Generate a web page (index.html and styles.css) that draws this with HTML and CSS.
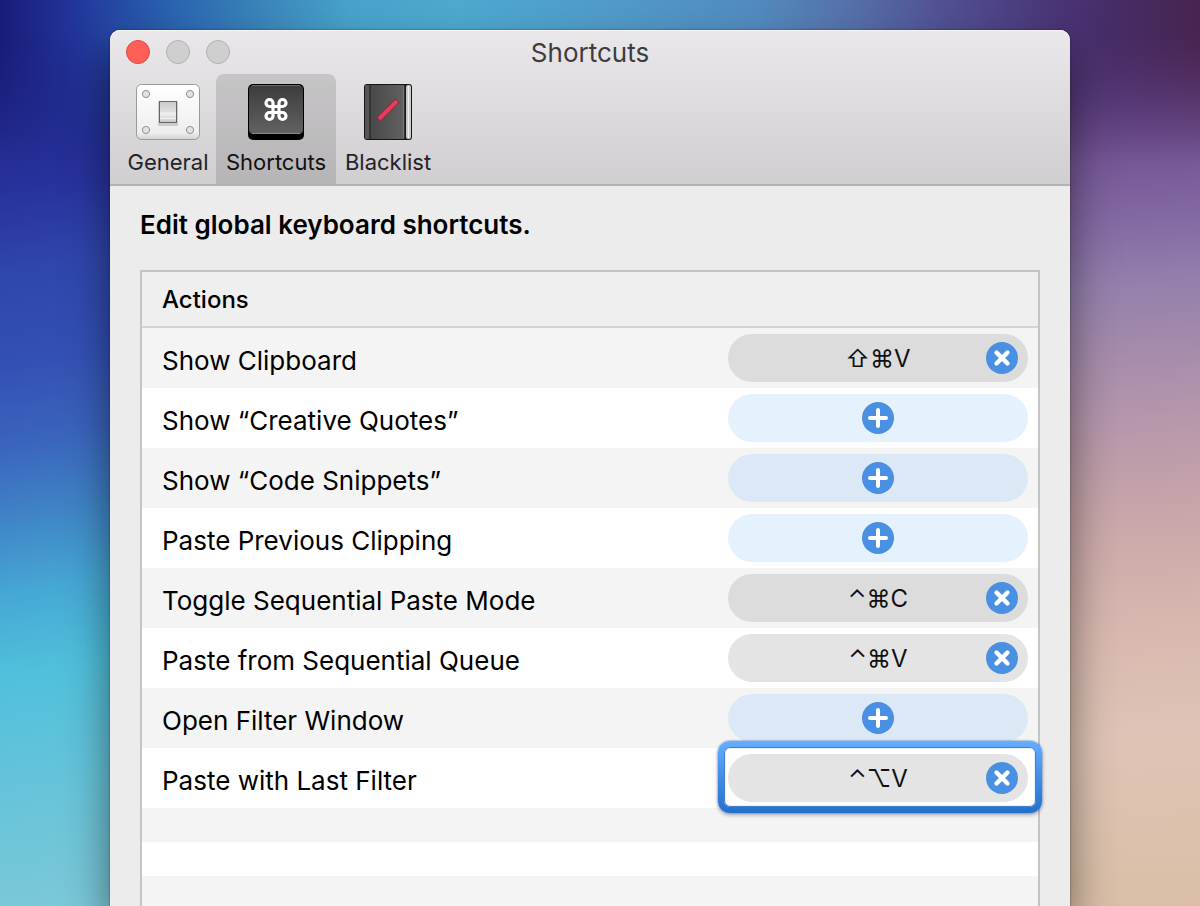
FILE: index.html
```
<!DOCTYPE html>
<html lang="en">
<head>
<meta charset="utf-8">
<title>Shortcuts</title>
<link rel="stylesheet" href="styles.css">
</head>
<body>
<svg class="defs" aria-hidden="true">
  <symbol id="plus" viewBox="0 0 32 32"><circle cx="16" cy="16" r="16" fill="#4a90e2"/><path d="M16 8v16M8 16h16" stroke="#fff" stroke-width="4" stroke-linecap="round"/></symbol>
  <symbol id="clear" viewBox="0 0 32 32"><circle cx="16" cy="16" r="16" fill="#4a90e2"/><path d="M10.500 10.500l11 11M21.500 10.500l-11 11" stroke="#fff" stroke-width="4.400" stroke-linecap="round"/></symbol>
</svg>
<main class="window">
  <header class="titlebar">
    <div class="title-row">
      <div class="lights">
        <button class="light light-close" aria-label="Close"></button>
        <button class="light" aria-label="Minimize" disabled></button>
        <button class="light" aria-label="Zoom" disabled></button>
      </div>
      <h1 class="title">Shortcuts</h1>
    </div>
    <nav class="tabs">
      <button class="tab tab-general">
        <svg class="tab-icon" viewBox="0 0 64 58" aria-hidden="true">
          <defs>
            <linearGradient id="plate" x2="0" y2="1"><stop offset="0" stop-color="#fff"/><stop offset=".88" stop-color="#eee"/><stop offset="1" stop-color="#d2d2d2"/></linearGradient>
            <linearGradient id="toggle" x2="0" y2="1"><stop offset="0" stop-color="#c9c9c9"/><stop offset=".5" stop-color="#e0e0e0"/><stop offset=".55" stop-color="#f1f1f1"/><stop offset="1" stop-color="#c6c6c6"/></linearGradient>
          </defs>
          <rect x=".5" y="1.500" width="63" height="55" rx="5" fill="url(#plate)" stroke="#999"/>
          <g fill="#e2e2e2" stroke="#929292"><circle cx="10" cy="11" r="3.600"/><circle cx="54" cy="11" r="3.600"/><circle cx="10" cy="47" r="3.600"/><circle cx="54" cy="47" r="3.600"/></g>
          <rect x="22" y="18" width="20" height="25" fill="#ccc"/>
          <rect x="23.500" y="18.500" width="17" height="21" fill="url(#toggle)" stroke="#666"/>
          <path d="M24 35.500h16" stroke="#f6f6f6"/>
        </svg>
        <span>General</span>
      </button>
      <button class="tab tab-shortcuts" aria-current="page">
        <svg class="tab-icon" viewBox="0 0 64 58" aria-hidden="true">
          <defs><linearGradient id="key" x2="0" y2="1"><stop offset="0" stop-color="#3c3c3c"/><stop offset="1" stop-color="#626262"/></linearGradient></defs>
          <rect x="4" y="1" width="56" height="56" rx="5" fill="#000"/>
          <rect x="5" y="2" width="54" height="49" rx="4.500" fill="url(#key)"/>
          <path d="M8 2.500h48" stroke="#696969"/><path d="M8 50.500h48" stroke="#898989"/>
          <path d="M29 23.500v6h6v-6zM29 23.500h-3.500a3.500 3.500 0 1 1 3.500-3.500zM35 23.500v-3.500a3.500 3.500 0 1 1 3.500 3.500zM35 29.500h3.500a3.500 3.500 0 1 1-3.500 3.500zM29 29.500v3.500a3.500 3.500 0 1 1-3.500-3.500z" fill="none" stroke="#fff" stroke-width="3.200"/>
        </svg>
        <span>Shortcuts</span>
      </button>
      <button class="tab tab-blacklist">
        <svg class="tab-icon" viewBox="0 0 64 58" aria-hidden="true">
          <defs><linearGradient id="cover"><stop offset="0" stop-color="#444"/><stop offset="1" stop-color="#626262"/></linearGradient></defs>
          <rect x="8" y="1" width="48" height="56" rx="3" fill="#151515"/>
          <rect x="50" y="2" width="5" height="54" rx="2" fill="#ccc"/><path d="M52.500 3v52" stroke="#eee"/>
          <rect x="9" y="2" width="40" height="54" rx="2" fill="url(#cover)"/>
          <rect x="9" y="2" width="4" height="54" fill="#555"/><path d="M14 2v54" stroke="#222"/><path d="M47.500 3v52" stroke="#777"/><path d="M48.500 2v54" stroke="#333"/>
          <path d="M24.500 34.500L39.500 19.500" stroke="#9c2539" stroke-width="6" stroke-linecap="square"/><path d="M24.500 34.500L39.500 19.500" stroke="#e0405d" stroke-width="4" stroke-linecap="square"/>
        </svg>
        <span>Blacklist</span>
      </button>
    </nav>
  </header>
  <section class="content">
    <h2 class="heading">Edit global keyboard shortcuts.</h2>
    <div class="list">
      <table class="table">
        <thead><tr><th colspan="2" scope="col">Actions</th></tr></thead>
        <tbody>
          <tr><td>Show Clipboard</td><td class="key-cell"><div class="pill"><button class="record">⇧⌘V</button><button class="clear" aria-label="Clear Show Clipboard"><svg><use href="#clear"/></svg></button></div></td></tr>
          <tr><td>Show “Creative Quotes”</td><td class="key-cell"><button class="pill pill-empty" aria-label="Add Creative Quotes shortcut"><svg><use href="#plus"/></svg></button></td></tr>
          <tr><td>Show “Code Snippets”</td><td class="key-cell"><button class="pill pill-empty" aria-label="Add Code Snippets shortcut"><svg><use href="#plus"/></svg></button></td></tr>
          <tr><td>Paste Previous Clipping</td><td class="key-cell"><button class="pill pill-empty" aria-label="Add Paste Previous Clipping shortcut"><svg><use href="#plus"/></svg></button></td></tr>
          <tr><td>Toggle Sequential Paste Mode</td><td class="key-cell"><div class="pill"><button class="record">⌃⌘C</button><button class="clear" aria-label="Clear Toggle Sequential Paste Mode"><svg><use href="#clear"/></svg></button></div></td></tr>
          <tr><td>Paste from Sequential Queue</td><td class="key-cell"><div class="pill"><button class="record">⌃⌘V</button><button class="clear" aria-label="Clear Paste from Sequential Queue"><svg><use href="#clear"/></svg></button></div></td></tr>
          <tr><td>Open Filter Window</td><td class="key-cell"><button class="pill pill-empty" aria-label="Add Open Filter Window shortcut"><svg><use href="#plus"/></svg></button></td></tr>
          <tr><td>Paste with Last Filter</td><td class="key-cell"><div class="pill pill-focused"><button class="record">⌃⌥V</button><button class="clear" aria-label="Clear Paste with Last Filter"><svg><use href="#clear"/></svg></button></div></td></tr>
        </tbody>
      </table>
      <div class="filler"></div>
    </div>
  </section>
</main>
</body>
</html>
```
FILE: styles.css
```
* { box-sizing: border-box; }
body {
  position: relative;
  isolation: isolate;
  margin: 0;
  height: 100vh;
  overflow: hidden;
  display: flex;
  padding: 30px 130px 0 110px;
  font-family: Inter, "DejaVu Sans", sans-serif;
  color: #000;
  background:
    linear-gradient(170deg, #191c78, #1e2585 8%, #28329c 19%, #2f46ac 27%, #3350b4 36%, #3a64bd 44%, #3f82c6 51%, #46a8d4 59%, #50c0dc 67%, #62c3da 76%, #75c6d8 87%, #88cfdc) left / 50% 100% no-repeat,
    linear-gradient(176deg, #472c66, #532f6d 7%, #664587 15%, #785a98 22%, #856ca5 28%, #9480ac 34%, #a88dab 42%, #b999ab 50%, #cba9a9 60%, #d8b9b0 71%, #dfc4b6 82%, #dabfa6) right / 50% 100% no-repeat;
}
/* Band of light along the top edge of the desktop */
body::before {
  content: "";
  position: absolute;
  inset: 0 0 auto;
  z-index: -1;
  height: 160px;
  background: linear-gradient(90deg, #191c78, #22349a 6%, #2a62b0 14%, #3a86ba 22%, #48a2cb 29%, #4da9d0 38%, #509ccb 50%, #528bbf 63%, #5670ab 71%, #514f93 79%, #4a3576 88%, #462c66 93%, #48244f);
  mask-image: linear-gradient(#000 30px, transparent);
}
button { font: inherit; color: inherit; border: 0; padding: 0; background: none; }
.defs { position: absolute; width: 0; height: 0; }
.window {
  flex: 1;
  display: flex;
  flex-direction: column;
  border-radius: 10px 10px 0 0;
  background: #ececec;
  box-shadow: 0 0 2px rgba(0, 0, 0, .5), 0 24px 44px rgba(0, 0, 0, .5);
}
.titlebar {
  border-radius: 10px 10px 0 0;
  border-bottom: 2px solid #b5b3b5;
  background: linear-gradient(#eae8ea, #d0ced0);
  box-shadow: inset 0 1px #f6f5f6;
}
.title-row { display: grid; grid-template-columns: 1fr auto 1fr; align-items: center; height: 44px; padding: 0 16px; }
.lights { display: flex; gap: 16px; }
.light { width: 24px; height: 24px; border-radius: 50%; background: #d0cfd0; border: 1px solid #b3b2b3; }
.light-close { background: #ff5f57; border-color: #e2463f; }
.title { margin: 0; padding-top: 2px; font-size: 26px; font-weight: 400; line-height: 32px; color: #3e3c3e; }
.tabs { display: flex; padding-left: 10px; }
.tab { display: flex; flex-direction: column; align-items: center; gap: 7px; height: 110px; padding-top: 9px; border-radius: 8px 8px 0 0; font-size: 22px; line-height: 28px; color: #252325; }
.tab-general { width: 96px; }
.tab-shortcuts { width: 120px; background: rgba(0, 0, 0, .12); color: #111; }
.tab-blacklist { width: 104px; }
.tab-icon { width: 64px; height: 58px; }
.content { flex: 1; display: flex; flex-direction: column; padding: 24px 30px 0; }
.heading { margin: 0 0 30px; font-size: 26px; font-weight: 600; line-height: 30px; }
.list { flex: 1; display: flex; flex-direction: column; border: 2px solid #c4c4c4; border-bottom: 0; background: #fff; }
.table { width: 100%; border-collapse: separate; border-spacing: 0; font-size: 26px; }
.table th { height: 56px; padding: 0 20px; text-align: left; font-size: 24px; font-weight: 500; background: #efefef; border-bottom: 2px solid #d4d4d4; }
.table td { height: 60px; padding: 4px 0 0 20px; }
.table tbody tr:nth-child(odd) { background: #f4f4f4; }
.table .key-cell { width: 320px; padding: 6px 10px 6px 0; }
.pill { position: relative; display: grid; grid-template-columns: 42px 1fr 42px; align-items: center; width: 300px; height: 48px; margin-left: auto; border-radius: 24px; background: #e4e4e4; }
tr:nth-child(odd) .pill { background: #dcdcdc; }
.record { grid-column: 2; height: 48px; font-size: 24px; color: #111; }
.clear, .clear svg, .pill-empty svg { display: block; width: 32px; height: 32px; }
.pill-empty { display: flex; justify-content: center; background: #e5f1fd; }
tr:nth-child(odd) .pill-empty { background: #dde8f6; }
.pill-focused { isolation: isolate; }
.pill-focused::before, .pill-focused::after { content: ""; position: absolute; }
.pill-focused::before {
  inset: -13px -14px -11px -10px;
  z-index: -2;
  border: 6px solid transparent;
  border-radius: 12px;
  background: linear-gradient(#fff, #fff) padding-box, linear-gradient(#64adff, #2270cc) border-box;
  box-shadow: inset 0 0 1px 1px #2f73cc, 0 0 2px #2f77d0, 0 2px 4px rgba(0, 0, 0, .3);
}
.pill-focused::after { inset: 0; z-index: -1; border-radius: 24px; background: #e4e4e4; }
.filler { flex: 1; background: repeating-linear-gradient(#f4f4f4 0 34px, #fff 34px 68px); }
```
